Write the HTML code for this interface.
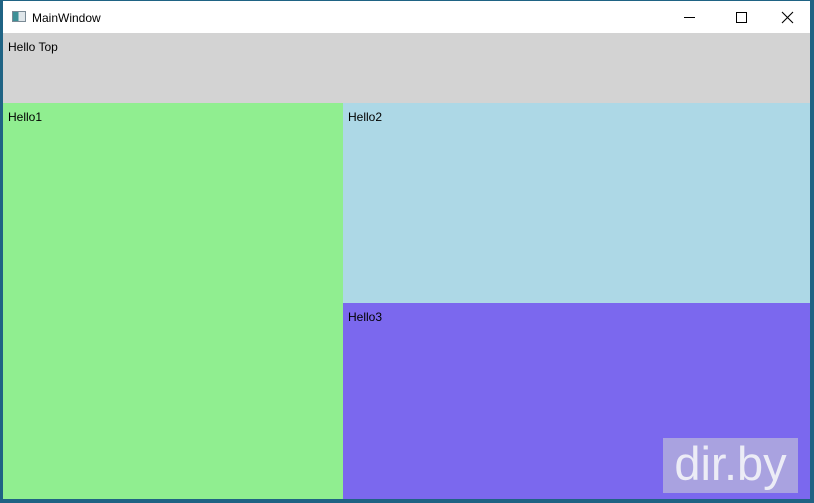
<!DOCTYPE html>
<html><head><meta charset="utf-8"><style>
*{margin:0;padding:0;box-sizing:border-box}
html,body{width:814px;height:503px;overflow:hidden;background:#1f6384;font-family:"Liberation Sans",sans-serif;font-size:12px;color:#000}
.win{position:absolute;left:3px;top:1px;width:807px;height:498px;background:#fff}
.title{position:absolute;left:0;top:0;width:807px;height:32px;background:#fff}
.title .t{position:absolute;left:29px;top:10px;font-size:12px}
.icon{position:absolute;left:9px;top:10px;width:14px;height:11px;border:1px solid #7a8a95;background:linear-gradient(90deg,#3d8f96 0,#3d8f96 45%,#dfe6ea 45%)}
.btn{position:absolute;top:0;height:32px;width:46px}
.top{position:absolute;left:0;top:32px;width:807px;height:70px;background:#d3d3d3}
.g{position:absolute;left:0;top:102px;width:340px;height:396px;background:#90ee90}
.b{position:absolute;left:340px;top:102px;width:467px;height:200px;background:#add8e6}
.p{position:absolute;left:340px;top:302px;width:467px;height:196px;background:#7b68ee}
.lbl{position:absolute;left:5px;top:7px}
.wm{position:absolute;left:663px;top:438px;width:135px;height:55px;background:#a9a2e0;color:#ececf6;font-size:47px;line-height:52px;text-align:center}
</style></head><body>
<div class="win">
 <div class="title"><div class="icon"></div><div class="t">MainWindow</div>
  <svg class="btn" style="left:663px" viewBox="0 0 46 32"><line x1="18" y1="16.5" x2="29" y2="16.5" stroke="#000" stroke-width="1"/></svg>
  <svg class="btn" style="left:715px" viewBox="0 0 46 32"><rect x="18.5" y="11.5" width="10" height="10" fill="none" stroke="#000" stroke-width="1"/></svg>
  <svg class="btn" style="left:761px" viewBox="0 0 46 32"><path d="M18 11L29 22M29 11L18 22" stroke="#000" stroke-width="1.1"/></svg>
 </div>
 <div class="top"><span class="lbl">Hello Top</span></div>
 <div class="g"><span class="lbl">Hello1</span></div>
 <div class="b"><span class="lbl">Hello2</span></div>
 <div class="p"><span class="lbl">Hello3</span></div>
</div>
<div class="wm">dir.by</div>
</body></html>
